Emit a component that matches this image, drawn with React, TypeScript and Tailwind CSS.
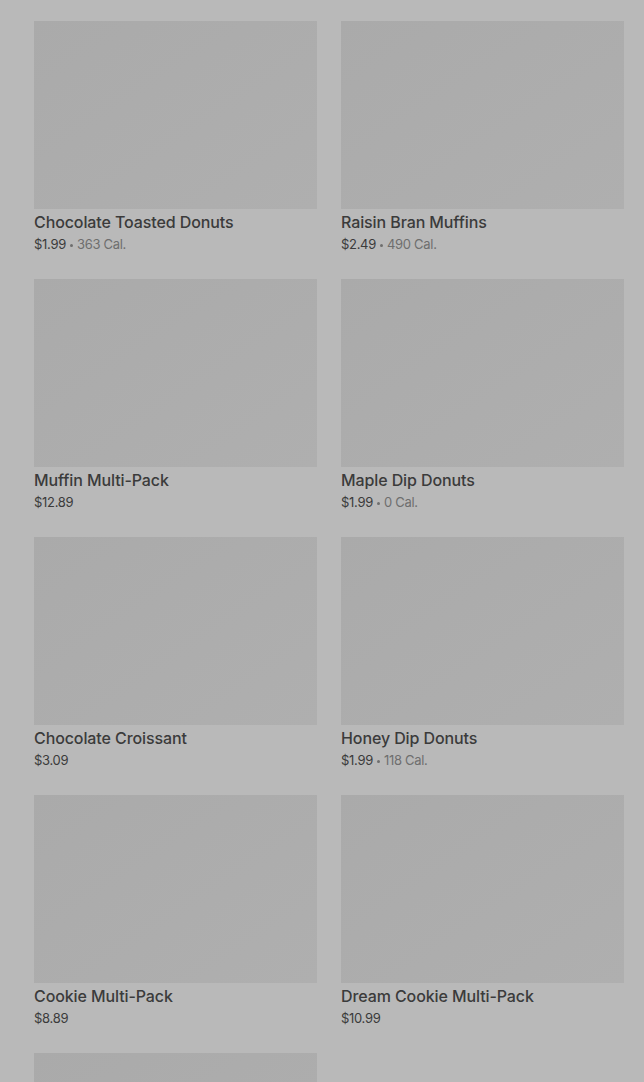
const items = [
  { name: 'Chocolate Toasted Donuts', price: '$1.99', cal: '363 Cal.' },
  { name: 'Raisin Bran Muffins', price: '$2.49', cal: '490 Cal.' },
  { name: 'Muffin Multi-Pack', price: '$12.89' },
  { name: 'Maple Dip Donuts', price: '$1.99', cal: '0 Cal.' },
  { name: 'Chocolate Croissant', price: '$3.09' },
  { name: 'Honey Dip Donuts', price: '$1.99', cal: '118 Cal.' },
  { name: 'Cookie Multi-Pack', price: '$8.89' },
  { name: 'Dream Cookie Multi-Pack', price: '$10.99' },
]

export default function App() {
  return (
    <div className="h-[1082px] bg-[#b9b9b9] pl-[34px] pr-[20px] pt-[21px] overflow-hidden" style={{ fontFamily: 'Inter, "Noto Sans", sans-serif' }}>
      <div className="grid grid-cols-2 gap-x-[24px] gap-y-[24px]">
        {items.map(item => (
          <div key={item.name}>
            <div className="h-[188px] bg-gradient-to-br from-[#aaaaaa] to-[#afafaf]" />
            <p className="mt-[1px] text-[16px] leading-[24px] font-medium text-[#3b3b3b] tracking-[-0.1px]">{item.name}</p>
            <div className="mt-[1px] flex h-[20px] items-center text-[13px] text-[#3b3b3b] tracking-[-0.3px]">
              <span>{item.price}</span>
              {item.cal && (
                <>
                  <span className="mx-[4px] h-[3px] w-[3px] rounded-full bg-[#6e6e6e]" />
                  <span className="text-[#6e6e6e]">{item.cal}</span>
                </>
              )}
            </div>
          </div>
        ))}
        <div className="h-[188px] bg-gradient-to-br from-[#aaaaaa] to-[#afafaf]" />
      </div>
    </div>
  )
}
